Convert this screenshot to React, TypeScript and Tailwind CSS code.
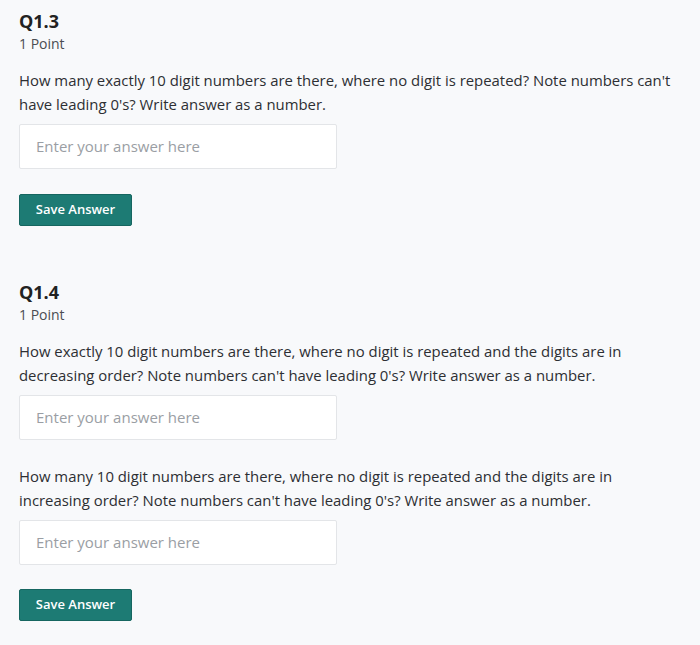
import React from "react";

const font = { fontFamily: "'Open Sans', Lato, sans-serif" };

function AnswerInput() {
  return (
    <div className="w-[318px] h-[45px] bg-white border border-[#e3e5e8] rounded-[2px] flex items-center px-[16px] text-[15px] text-[#9a9ea4]">
      Enter your answer here
    </div>
  );
}

function SaveButton() {
  return (
    <button className="w-[113px] h-[32px] bg-[#1d7b74] border border-[#166660] rounded-[2px] text-white text-[13px] font-semibold flex items-center justify-center">
      Save Answer
    </button>
  );
}

export default function App() {
  return (
    <div className="w-[700px] h-[645px] bg-[#f8f9fb] text-[#2d2f33] px-[19px]" style={font}>
      <div className="pt-[9px]">
        <div className="text-[18px] font-bold leading-[24px] text-[#222]">Q1.3</div>
        <div className="text-[14px] leading-[20px] mt-[1px] text-[#4a4d52]">1 Point</div>
        <p className="text-[14.9px] leading-[24px] mt-[14px] w-[662px]">
          How many exactly 10 digit numbers are there, where no digit is repeated? Note numbers can't have leading 0's? Write answer as a number.
        </p>
        <div className="mt-[8px]"><AnswerInput /></div>
        <div className="mt-[25px]"><SaveButton /></div>
      </div>
      <div className="pt-[54px]">
        <div className="text-[18px] font-bold leading-[24px] text-[#222]">Q1.4</div>
        <div className="text-[14px] leading-[20px] mt-[1px] text-[#4a4d52]">1 Point</div>
        <p className="text-[14.9px] leading-[24px] mt-[14px] w-[620px]">
          How exactly 10 digit numbers are there, where no digit is repeated and the digits are in decreasing order? Note numbers can't have leading 0's? Write answer as a number.
        </p>
        <div className="mt-[8px]"><AnswerInput /></div>
        <p className="text-[14.9px] leading-[24px] mt-[24px] w-[620px]">
          How many 10 digit numbers are there, where no digit is repeated and the digits are in increasing order? Note numbers can't have leading 0's? Write answer as a number.
        </p>
        <div className="mt-[8px]"><AnswerInput /></div>
        <div className="mt-[24px]"><SaveButton /></div>
      </div>
    </div>
  );
}
